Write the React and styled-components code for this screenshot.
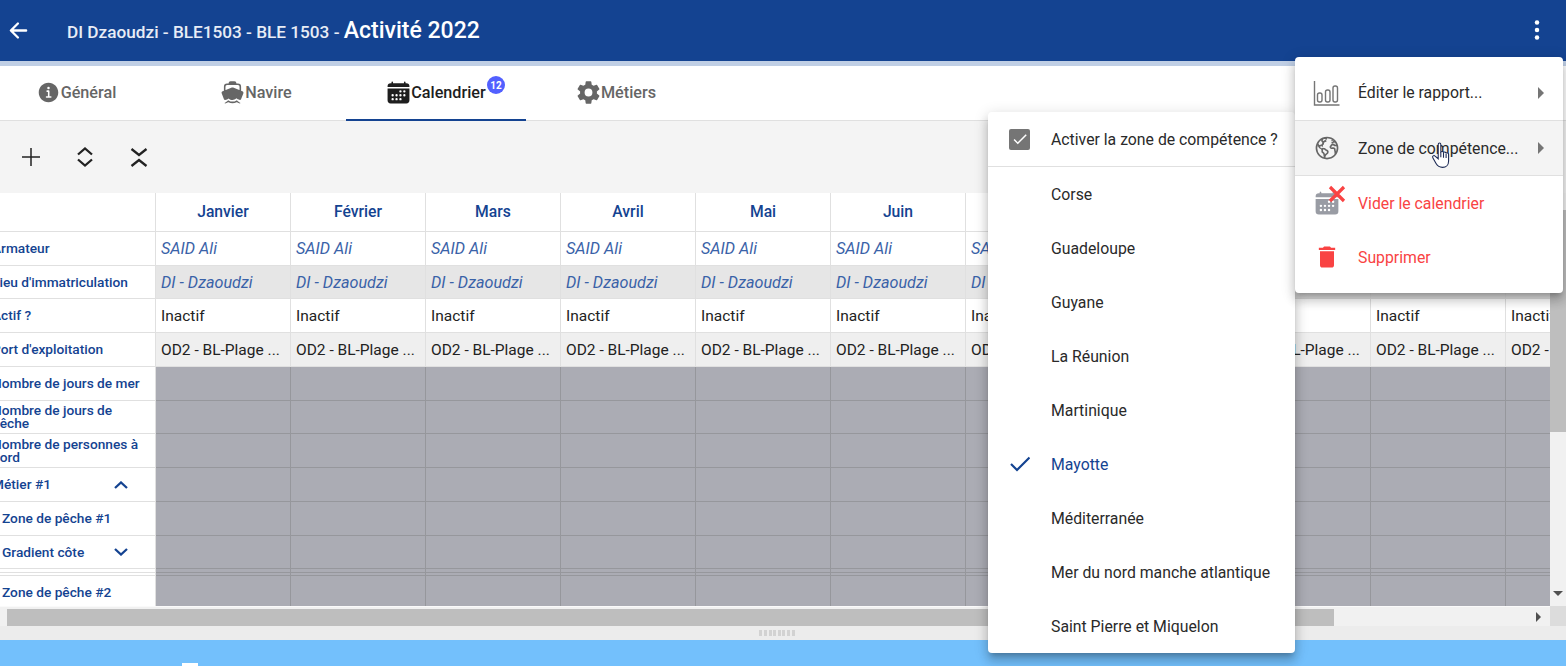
import React from 'react';
import styled, { createGlobalStyle } from 'styled-components';
import {
    IoArrowBack,
    IoBoat,
    IoCalendar,
    IoEarthOutline,
    IoEllipsisVertical,
    IoInformationCircle,
    IoSettingsSharp,
} from 'react-icons/io5';
import { MdCheck, MdDelete } from 'react-icons/md';

const BLUE = '#144391';
const RED = '#f94343';

const GlobalStyle = createGlobalStyle`
    html, body {
        margin: 0;
        padding: 0;
        overflow: hidden;
    }
    body {
        font-family: Roboto, "Liberation Sans", sans-serif;
    }
`

const Page = styled.div`
    position: relative;
    display: flex;
    flex-direction: column;
    width: 1566px;
    height: 666px;
    overflow: hidden;
    background-color: #fff;
`

const Header = styled.header`
    display: flex;
    align-items: center;
    flex-shrink: 0;
    box-sizing: border-box;
    height: 66px;
    padding: 0 17px 1px 6px;
    background-color: ${BLUE};
    border-bottom: 5px solid #c0cfe5;
    color: #fff;
`

const BackButton = styled.div`
    display: flex;
    width: 25px;
    margin-right: 36px;
    font-size: 25px;
`

const Title = styled.div`
    flex: 1;
    font-size: 17.2px;
    font-weight: 500;
    color: #e8edf6;
`

const TitleStrong = styled.span`
    font-size: 23px;
    color: #fff;
`

const MoreButton = styled.div`
    display: flex;
    font-size: 24px;
`

const TabBar = styled.nav`
    display: flex;
    flex-shrink: 0;
    height: 54px;
    margin-left: -14px;
    border-bottom: 1px solid #e0e0e0;
`

const Tab = styled.div`
    position: relative;
    display: flex;
    align-items: center;
    justify-content: center;
    box-sizing: border-box;
    width: 180px;
    font-size: 16.2px;
    font-weight: 500;
    color: ${props => props.$active ? '#1e1e1e' : '#666'};
    border-bottom: 2px solid ${props => props.$active ? BLUE : 'transparent'};
    margin-bottom: -1px;
    svg {
        font-size: 25px;
    }
`

const Badge = styled.span`
    position: absolute;
    top: 10px;
    left: 141px;
    display: flex;
    align-items: center;
    justify-content: center;
    width: 18px;
    height: 18px;
    border-radius: 50%;
    background-color: #5260ff;
    color: #fff;
    font-size: 10px;
    font-weight: 700;
`

const Toolbar = styled.div`
    display: flex;
    align-items: center;
    flex-shrink: 0;
    height: 72px;
    padding-left: 4px;
    background-color: #f4f4f4;
`

const ToolButton = styled.div`
    display: flex;
    align-items: center;
    justify-content: center;
    width: 54px;
    height: 54px;
    color: #222;
`

const Main = styled.div`
    display: flex;
    flex-shrink: 0;
    height: 433px;
`

const TableColumn = styled.div`
    display: flex;
    flex-direction: column;
    width: 1550px;
`

const Table = styled.div`
    height: 413px;
    overflow: hidden;
`

const Row = styled.div`
    display: flex;
    height: ${props => props.$height}px;
`

const Label = styled.div`
    display: flex;
    align-items: center;
    justify-content: space-between;
    flex-shrink: 0;
    box-sizing: border-box;
    width: 156px;
    padding-left: ${props => props.$indent ? 2 : 0}px;
    padding-right: 27px;
    overflow: hidden;
    border-right: 1px solid #e0e0e0;
    border-bottom: 1px solid #e0e0e0;
    color: ${BLUE};
    font-size: 13.7px;
    font-weight: 500;
    line-height: 13px;
    background-color: #fff;
`

const LabelText = styled.span`
    display: block;
    flex-shrink: 0;
    width: ${props => props.$wrap ? '150px' : 'auto'};
    margin-left: ${props => props.$indent ? 0 : -8}px;
`

const Cell = styled.div`
    display: flex;
    align-items: center;
    flex-shrink: 0;
    box-sizing: border-box;
    width: 135px;
    padding: 0 5px;
    border-right: 1px solid ${props => props.$kind === 'disabled' ? '#96979c' : '#e0e0e0'};
    border-bottom: 1px solid ${props => props.$kind === 'disabled' ? '#96979c' : '#e0e0e0'};
    background-color: ${props => props.$bg || '#fff'};
    color: ${props => props.$kind === 'link' ? '#3a62a8' : '#222'};
    font-size: ${props => props.$kind === 'link' ? 16.2 : 15.5}px;
    font-style: ${props => props.$kind === 'link' ? 'italic' : 'normal'};
    white-space: nowrap;
    overflow: hidden;
`

const MonthCell = styled.div`
    display: flex;
    align-items: center;
    justify-content: center;
    flex-shrink: 0;
    box-sizing: border-box;
    width: 135px;
    padding-bottom: 2px;
    border-right: 1px solid #e0e0e0;
    border-bottom: 1px solid #e0e0e0;
    color: ${BLUE};
    font-size: 15.7px;
    font-weight: 500;
`

const HScroll = styled.div`
    display: flex;
    align-items: center;
    justify-content: space-between;
    box-sizing: border-box;
    height: 20px;
    padding: 1px 9px 0 7px;
    border-top: 1px solid #fafafa;
    background-color: #f1f1f1;
`

const HThumb = styled.div`
    width: 1327px;
    height: 17px;
    background-color: #bebebe;
`

const ArrowRight = styled.div`
    width: 0;
    height: 0;
    border-top: 5px solid transparent;
    border-bottom: 5px solid transparent;
    border-left: 5px solid #505050;
`

const VScroll = styled.div`
    display: flex;
    flex-direction: column;
    width: 16px;
    background-color: #f1f1f1;
`

const VThumb = styled.div`
    flex-shrink: 0;
    height: 222px;
    margin-top: 17px;
    background-color: #bebebe;
`

const ArrowDown = styled.div`
    flex-shrink: 0;
    width: 0;
    height: 0;
    margin: 159px auto 0;
    border-left: 5px solid transparent;
    border-right: 5px solid transparent;
    border-top: 5px solid #505050;
`

const Corner = styled.div`
    flex-shrink: 0;
    height: 20px;
    margin-top: auto;
    background-color: #dcdcdc;
`

const Splitter = styled.div`
    display: flex;
    align-items: center;
    justify-content: center;
    flex-shrink: 0;
    height: 14px;
    padding-right: 12px;
    gap: 1.6px;
    background-color: #ececec;
`

const SplitterDot = styled.span`
    width: 3px;
    height: 6px;
    background-color: #d2d2d2;
`

const Footer = styled.div`
    flex: 1;
    padding: 23px 0 0 182px;
    background-color: #73c0fc;
`

const FooterMark = styled.div`
    width: 16px;
    height: 4px;
    background-color: #fff;
`

const Menu = styled.div`
    position: absolute;
    top: ${props => props.$top}px;
    left: ${props => props.$left}px;
    z-index: ${props => props.$z};
    width: ${props => props.$width}px;
    padding: ${props => props.$padded ? '8px 0 9px' : '0'};
    border-radius: 4px;
    background-color: #fff;
    box-shadow: 0 5px 5px -3px rgba(0, 0, 0, .2), 0 8px 10px 1px rgba(0, 0, 0, .14), 0 3px 14px 2px rgba(0, 0, 0, .12);
`

const MenuItem = styled.div`
    position: relative;
    display: flex;
    align-items: center;
    height: ${props => props.$height || 54}px;
    background-color: ${props => props.$hover ? '#f4f4f4' : 'transparent'};
    border-bottom: ${props => props.$divider ? '1px solid #e0e0e0' : 'none'};
    color: ${props => props.$color || '#2a2a2a'};
    font-size: 15.8px;
`

const MenuIcon = styled.div`
    position: relative;
    display: flex;
    align-items: center;
    justify-content: center;
    flex-shrink: 0;
    width: 63px;
    height: 100%;
    color: ${props => props.$color || '#666'};
    font-size: ${props => props.$size || 26}px;
`

const MenuText = styled.span`
    flex: 1;
`

const SubArrow = styled.div`
    width: 0;
    height: 0;
    margin-right: 19px;
    border-top: 6px solid transparent;
    border-bottom: 6px solid transparent;
    border-left: 6px solid #757575;
`

const Checkbox = styled.div`
    display: flex;
    align-items: center;
    justify-content: center;
    width: 21px;
    height: 21px;
    border-radius: 2px;
    background-color: #757575;
    color: #fff;
    font-size: 18px;
`

const CrossIcon = styled.svg`
    position: absolute;
    top: 9px;
    left: 33px;
`

const Pointer = styled.svg`
    position: absolute;
    top: 142px;
    left: 1431px;
    z-index: 5;
`

const UnfoldIcon = ({ less }) => (
    <svg width="24" height="24" viewBox="0 0 24 24" fill="none" stroke="currentColor" strokeWidth="2.3">
        {less
            ? <path d="M4.500 4l7.500 6 7.500-6M4.500 21l7.500-6 7.500 6" />
            : <path d="M5 9.500L12 3.500l7 6M5 14.500l7 6 7-6" />}
    </svg>
)

const PlusIcon = () => (
    <svg width="24" height="24" viewBox="0 0 24 24" fill="none" stroke="currentColor" strokeWidth="1.5">
        <path d="M12 3v18M3 12h18" />
    </svg>
)

const ChevronIcon = ({ up }) => (
    <svg width="14" height="8" viewBox="0 0 14 8" fill="none" stroke="currentColor" strokeWidth="2.3">
        {up ? <path d="M1 7l6-5.500L13 7" /> : <path d="M1 1l6 5.500L13 1" />}
    </svg>
)

const CheckIcon = () => (
    <svg width="20" height="16" viewBox="0 0 20 16" fill="none" stroke="currentColor" strokeWidth="2.200">
        <path d="M1 8l6 6L19.500 1.500" />
    </svg>
)

const ReportIcon = () => (
    <svg width="28" height="28" viewBox="0 0 28 28" fill="none" stroke="#757575" strokeWidth="1.4">
        <path d="M1.500 2v24h25" />
        <rect x="4.500" y="14" width="4.500" height="9" rx="2" />
        <rect x="12.500" y="11" width="4.500" height="12" rx="2" />
        <rect x="20" y="7" width="4.500" height="16" rx="2" />
    </svg>
)

const months = ['Janvier', 'Février', 'Mars', 'Avril', 'Mai', 'Juin', 'Juillet', 'Août', 'Septembre', 'Octobre', 'Novembre']

const rows = [
    { label: 'Armateur', height: 34, text: 'SAID Ali', kind: 'link' },
    { label: "Lieu d'immatriculation", height: 33, text: 'DI - Dzaoudzi', kind: 'link', bg: '#e6e6e6' },
    { label: 'Actif ?', height: 34, text: 'Inactif' },
    { label: "Port d'exploitation", height: 34, text: 'OD2 - BL-Plage ...', bg: '#efefef' },
    { label: 'Nombre de jours de mer', height: 34, kind: 'disabled' },
    { label: 'Nombre de jours de pêche', height: 33, kind: 'disabled', wrap: true },
    { label: 'Nombre de personnes à bord', height: 34, kind: 'disabled', wrap: true },
    { label: 'Métier #1', height: 34, kind: 'disabled', chevron: 'up' },
    { label: 'Zone de pêche #1', height: 34, kind: 'disabled', indent: true },
    { label: 'Gradient côte', height: 33, kind: 'disabled', indent: true, chevron: 'down' },
    { label: '', height: 4, kind: 'disabled' },
    { label: '', height: 3, kind: 'disabled' },
    { label: 'Zone de pêche #2', height: 33, kind: 'disabled', indent: true },
]

const zones = ['Corse', 'Guadeloupe', 'Guyane', 'La Réunion', 'Martinique', 'Mayotte', 'Méditerranée', 'Mer du nord manche atlantique', 'Saint Pierre et Miquelon']

const App = () => {
    return (
        <Page>
            <GlobalStyle />
            <Header>
                <BackButton><IoArrowBack /></BackButton>
                <Title>DI Dzaoudzi - BLE1503 - BLE 1503 - <TitleStrong>Activité 2022</TitleStrong></Title>
                <MoreButton><IoEllipsisVertical /></MoreButton>
            </Header>

            <TabBar>
                <Tab><IoInformationCircle />Général</Tab>
                <Tab><IoBoat />Navire</Tab>
                <Tab $active><IoCalendar />Calendrier<Badge>12</Badge></Tab>
                <Tab><IoSettingsSharp />Métiers</Tab>
            </TabBar>

            <Toolbar>
                <ToolButton><PlusIcon /></ToolButton>
                <ToolButton><UnfoldIcon /></ToolButton>
                <ToolButton><UnfoldIcon less /></ToolButton>
            </Toolbar>

            <Main>
                <TableColumn>
                    <Table>
                        <Row $height={39}>
                            <Label />
                            {months.map((item, index) => {
                                return (
                                    <MonthCell key={index}>{item}</MonthCell>
                                )
                            })}
                        </Row>
                        {rows.map((row, index) => {
                            return (
                                <Row key={index} $height={row.height}>
                                    <Label $indent={row.indent}>
                                        <LabelText $wrap={row.wrap} $indent={row.indent}>{row.label}</LabelText>
                                        {row.chevron && <ChevronIcon up={row.chevron === 'up'} />}
                                    </Label>
                                    {months.map((item, cellIndex) => {
                                        return (
                                            <Cell
                                                key={cellIndex}
                                                $kind={row.kind}
                                                $bg={row.kind === 'disabled' ? '#abacb4' : row.bg}
                                            >
                                                {row.text}
                                            </Cell>
                                        )
                                    })}
                                </Row>
                            )
                        })}
                    </Table>
                    <HScroll>
                        <HThumb />
                        <ArrowRight />
                    </HScroll>
                </TableColumn>
                <VScroll>
                    <VThumb />
                    <ArrowDown />
                    <Corner />
                </VScroll>
            </Main>

            <Splitter>
                {[0, 1, 2, 3, 4, 5, 6, 7].map(item => <SplitterDot key={item} />)}
            </Splitter>
            <Footer><FooterMark /></Footer>

            <Menu $top={112} $left={988} $width={307} $z={2}>
                <MenuItem $divider>
                    <MenuIcon><Checkbox><MdCheck /></Checkbox></MenuIcon>
                    <MenuText>Activer la zone de compétence ?</MenuText>
                </MenuItem>
                {zones.map((item, index) => {
                    const selected = item === 'Mayotte'
                    return (
                        <MenuItem key={index} $color={selected ? BLUE : undefined}>
                            <MenuIcon $color={BLUE}>{selected && <CheckIcon />}</MenuIcon>
                            <MenuText>{item}</MenuText>
                        </MenuItem>
                    )
                })}
            </Menu>

            <Menu $top={57} $left={1295} $width={268} $z={3} $padded>
                <MenuItem $divider $height={55}>
                    <MenuIcon><ReportIcon /></MenuIcon>
                    <MenuText>Éditer le rapport...</MenuText>
                    <SubArrow />
                </MenuItem>
                <MenuItem $divider $hover>
                    <MenuIcon><IoEarthOutline /></MenuIcon>
                    <MenuText>Zone de compétence...</MenuText>
                    <SubArrow />
                </MenuItem>
                <MenuItem $color={RED}>
                    <MenuIcon $color="#999ca4">
                        <IoCalendar />
                        <CrossIcon width="18" height="18" viewBox="0 0 18 18" stroke={RED} strokeWidth="3.2" fill="none">
                            <path d="M2 2l14 14M16 2L2 16" />
                        </CrossIcon>
                    </MenuIcon>
                    <MenuText>Vider le calendrier</MenuText>
                </MenuItem>
                <MenuItem $color={RED}>
                    <MenuIcon $color={RED} $size={28}><MdDelete /></MenuIcon>
                    <MenuText>Supprimer</MenuText>
                </MenuItem>
            </Menu>

            <Pointer width="22" height="27" viewBox="0 0 19 25" fill="#fff" stroke="#1c2a55" strokeWidth="1">
                <path d="M6 2.200c0-1.600 2.400-1.600 2.400 0v7c.8-.6 2.100-.5 2.500.4.8-.5 2-.3 2.400.6.9-.4 2.200 0 2.300 1.200v6.100c0 3.500-2.300 6-5.600 6-3.100 0-4.700-1.200-6-3.500L1 14.500c-.8-1.400 1-2.600 2.100-1.500L6 15.500z" />
                <path d="M8.400 9.200v5M10.900 10v4.500M13.300 11.200v3.500" fill="none" />
            </Pointer>
        </Page>
    )
}

export default App;
